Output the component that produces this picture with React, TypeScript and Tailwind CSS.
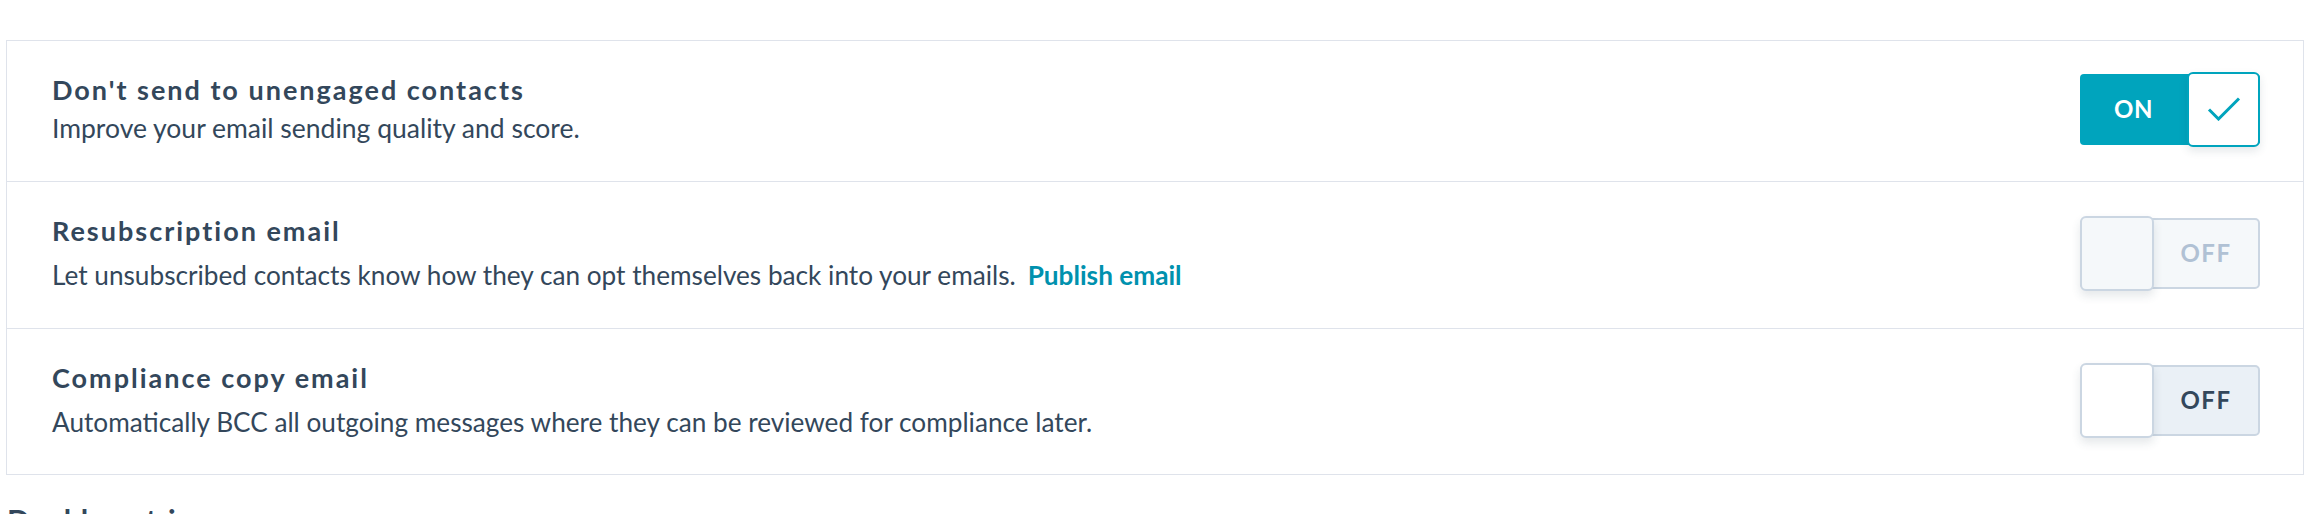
import React from 'react';

type ToggleState = 'on' | 'off' | 'disabled';

const settings: { title: string; description: string; link?: string; state: ToggleState }[] = [
    {
        title: "Don't send to unengaged contacts",
        description: 'Improve your email sending quality and score.',
        state: 'on',
    },
    {
        title: 'Resubscription email',
        description: 'Let unsubscribed contacts know how they can opt themselves back into your emails.',
        link: 'Publish email',
        state: 'disabled',
    },
    {
        title: 'Compliance copy email',
        description: 'Automatically BCC all outgoing messages where they can be reviewed for compliance later.',
        state: 'off',
    },
];

function Toggle({ state }: { state: ToggleState }) {
    if (state === 'on') {
        return (
            <div className="relative w-[180px] h-[75px] flex items-center">
                <div className="w-full h-[71px] rounded-[4px] bg-[#00a4bd] flex items-center">
                    <span className="w-[107px] text-center text-white text-[24px] font-bold tracking-[0.5px]">ON</span>
                </div>
                <div className="absolute right-0 top-0 w-[73px] h-[75px] rounded-[6px] bg-white border-2 border-[#00a4bd] shadow-[0_4px_8px_rgba(45,62,80,0.12)] flex items-center justify-center">
                    <svg width="34" height="24" viewBox="0 0 34 24" fill="none">
                        <path d="M2 12.5 L11.5 22 L32 1.5" stroke="#00a4bd" strokeWidth="3" />
                    </svg>
                </div>
            </div>
        );
    }
    const disabled = state === 'disabled';
    return (
        <div className="relative w-[180px] h-[75px] flex items-center">
            <div
                className={
                    disabled
                        ? 'w-full h-[71px] rounded-[5px] border-2 border-[#cbd6e2] bg-[#f5f8fa] flex items-center justify-end'
                        : 'w-full h-[71px] rounded-[5px] border-2 border-[#cbd6e2] bg-[#eaf0f6] flex items-center justify-end'
                }
            >
                <span
                    className={
                        disabled
                            ? 'w-[104px] text-center text-[24px] font-bold tracking-[1.5px] text-[#b0c1d4]'
                            : 'w-[104px] text-center text-[24px] font-bold tracking-[1.5px] text-[#33475b]'
                    }
                >
                    OFF
                </span>
            </div>
            <div
                className={
                    disabled
                        ? 'absolute left-0 top-0 w-[74px] h-[75px] rounded-[6px] border-2 border-[#cbd6e2] bg-[#f5f8fa] shadow-[0_5px_10px_rgba(45,62,80,0.12)]'
                        : 'absolute left-0 top-0 w-[74px] h-[75px] rounded-[6px] border-2 border-[#cbd6e2] bg-white shadow-[0_5px_10px_rgba(45,62,80,0.12)]'
                }
            />
        </div>
    );
}

export default function App() {
    return (
        <div className="bg-white w-[2318px] h-[514px] overflow-hidden pt-[40px] font-['Lato',sans-serif] text-[#33475b]">
            {/* Settings card */}
            <div className="ml-[6px] mr-[14px] border border-[#dfe3eb]">
                {settings.map((s, index) => (
                    <div
                        key={index}
                        className={
                            index < settings.length - 1
                                ? 'flex items-center justify-between pl-[45px] pr-[43px] pt-[30px] pb-[34px] border-b border-[#dfe3eb]'
                                : 'flex items-center justify-between pl-[45px] pr-[43px] pt-[30px] pb-[33px]'
                        }
                    >
                        <div>
                            <h3 className="text-[27px] leading-[38px] font-bold tracking-[2px]">{s.title}</h3>
                            <p className={index === 0 ? 'text-[26.5px] leading-[38px]' : 'text-[26.2px] leading-[38px] mt-[6px]'}>
                                {s.description}
                                {s.link && (
                                    <a href="#" className="ml-[12px] font-bold text-[#0091ae]">
                                        {s.link}
                                    </a>
                                )}
                            </p>
                        </div>
                        <Toggle state={s.state} />
                    </div>
                ))}
            </div>

            <h2 className="mt-[27px] ml-[7px] text-[30px] leading-[36px] font-bold">Double opt-in</h2>
        </div>
    );
}
